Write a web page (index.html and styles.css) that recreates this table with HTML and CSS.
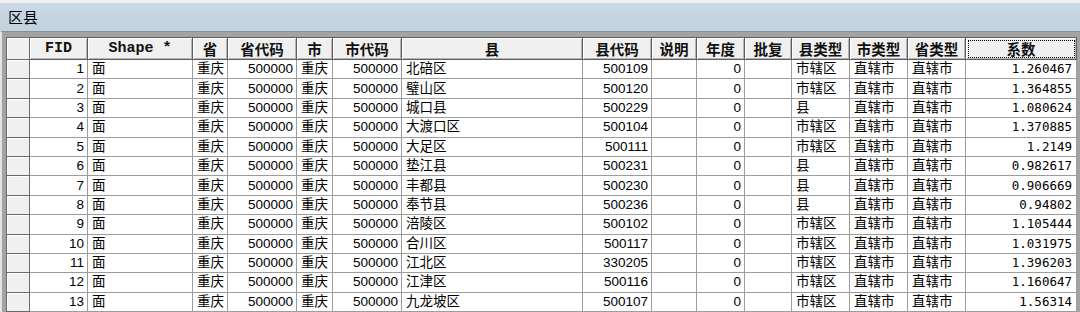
FILE: index.html
```html
<!DOCTYPE html>
<html lang="zh-CN">
<head>
<meta charset="utf-8">
<title>区县</title>
<link rel="stylesheet" href="styles.css">
</head>
<body>
<div class="window">
  <div class="titlebar">区县</div>
  <div class="frame">
    <table class="grid">
      <colgroup>
        <col class="c-rh"><col class="c-fid"><col class="c-shape"><col class="c-sheng"><col class="c-code">
        <col class="c-shi"><col class="c-code"><col class="c-xian"><col class="c-code"><col class="c-sm">
        <col class="c-nd"><col class="c-pf"><col class="c-type"><col class="c-type"><col class="c-type"><col class="c-xs">
      </colgroup>
      <thead>
        <tr>
          <th class="rh"></th><th class="lat">FID</th><th class="lat">Shape *</th><th>省</th><th>省代码</th><th>市</th><th>市代码</th><th>县</th><th>县代码</th><th>说明</th><th>年度</th><th>批复</th><th>县类型</th><th>市类型</th><th>省类型</th><th class="sel">系数</th>
        </tr>
      </thead>
      <tbody>
        <tr><td class="rh"></td><td class="num">1</td><td class="txt">面</td><td class="txt">重庆</td><td class="num">500000</td><td class="txt">重庆</td><td class="num">500000</td><td class="txt">北碚区</td><td class="num">500109</td><td></td><td class="num">0</td><td></td><td class="txt">市辖区</td><td class="txt">直辖市</td><td class="txt">直辖市</td><td class="dbl">1.260467</td></tr>
        <tr><td class="rh"></td><td class="num">2</td><td class="txt">面</td><td class="txt">重庆</td><td class="num">500000</td><td class="txt">重庆</td><td class="num">500000</td><td class="txt">璧山区</td><td class="num">500120</td><td></td><td class="num">0</td><td></td><td class="txt">市辖区</td><td class="txt">直辖市</td><td class="txt">直辖市</td><td class="dbl">1.364855</td></tr>
        <tr><td class="rh"></td><td class="num">3</td><td class="txt">面</td><td class="txt">重庆</td><td class="num">500000</td><td class="txt">重庆</td><td class="num">500000</td><td class="txt">城口县</td><td class="num">500229</td><td></td><td class="num">0</td><td></td><td class="txt">县</td><td class="txt">直辖市</td><td class="txt">直辖市</td><td class="dbl">1.080624</td></tr>
        <tr><td class="rh"></td><td class="num">4</td><td class="txt">面</td><td class="txt">重庆</td><td class="num">500000</td><td class="txt">重庆</td><td class="num">500000</td><td class="txt">大渡口区</td><td class="num">500104</td><td></td><td class="num">0</td><td></td><td class="txt">市辖区</td><td class="txt">直辖市</td><td class="txt">直辖市</td><td class="dbl">1.370885</td></tr>
        <tr><td class="rh"></td><td class="num">5</td><td class="txt">面</td><td class="txt">重庆</td><td class="num">500000</td><td class="txt">重庆</td><td class="num">500000</td><td class="txt">大足区</td><td class="num">500111</td><td></td><td class="num">0</td><td></td><td class="txt">市辖区</td><td class="txt">直辖市</td><td class="txt">直辖市</td><td class="dbl">1.2149</td></tr>
        <tr><td class="rh"></td><td class="num">6</td><td class="txt">面</td><td class="txt">重庆</td><td class="num">500000</td><td class="txt">重庆</td><td class="num">500000</td><td class="txt">垫江县</td><td class="num">500231</td><td></td><td class="num">0</td><td></td><td class="txt">县</td><td class="txt">直辖市</td><td class="txt">直辖市</td><td class="dbl">0.982617</td></tr>
        <tr><td class="rh"></td><td class="num">7</td><td class="txt">面</td><td class="txt">重庆</td><td class="num">500000</td><td class="txt">重庆</td><td class="num">500000</td><td class="txt">丰都县</td><td class="num">500230</td><td></td><td class="num">0</td><td></td><td class="txt">县</td><td class="txt">直辖市</td><td class="txt">直辖市</td><td class="dbl">0.906669</td></tr>
        <tr><td class="rh"></td><td class="num">8</td><td class="txt">面</td><td class="txt">重庆</td><td class="num">500000</td><td class="txt">重庆</td><td class="num">500000</td><td class="txt">奉节县</td><td class="num">500236</td><td></td><td class="num">0</td><td></td><td class="txt">县</td><td class="txt">直辖市</td><td class="txt">直辖市</td><td class="dbl">0.94802</td></tr>
        <tr><td class="rh"></td><td class="num">9</td><td class="txt">面</td><td class="txt">重庆</td><td class="num">500000</td><td class="txt">重庆</td><td class="num">500000</td><td class="txt">涪陵区</td><td class="num">500102</td><td></td><td class="num">0</td><td></td><td class="txt">市辖区</td><td class="txt">直辖市</td><td class="txt">直辖市</td><td class="dbl">1.105444</td></tr>
        <tr><td class="rh"></td><td class="num">10</td><td class="txt">面</td><td class="txt">重庆</td><td class="num">500000</td><td class="txt">重庆</td><td class="num">500000</td><td class="txt">合川区</td><td class="num">500117</td><td></td><td class="num">0</td><td></td><td class="txt">市辖区</td><td class="txt">直辖市</td><td class="txt">直辖市</td><td class="dbl">1.031975</td></tr>
        <tr><td class="rh"></td><td class="num">11</td><td class="txt">面</td><td class="txt">重庆</td><td class="num">500000</td><td class="txt">重庆</td><td class="num">500000</td><td class="txt">江北区</td><td class="num">330205</td><td></td><td class="num">0</td><td></td><td class="txt">市辖区</td><td class="txt">直辖市</td><td class="txt">直辖市</td><td class="dbl">1.396203</td></tr>
        <tr><td class="rh"></td><td class="num">12</td><td class="txt">面</td><td class="txt">重庆</td><td class="num">500000</td><td class="txt">重庆</td><td class="num">500000</td><td class="txt">江津区</td><td class="num">500116</td><td></td><td class="num">0</td><td></td><td class="txt">市辖区</td><td class="txt">直辖市</td><td class="txt">直辖市</td><td class="dbl">1.160647</td></tr>
        <tr><td class="rh"></td><td class="num">13</td><td class="txt">面</td><td class="txt">重庆</td><td class="num">500000</td><td class="txt">重庆</td><td class="num">500000</td><td class="txt">九龙坡区</td><td class="num">500107</td><td></td><td class="num">0</td><td></td><td class="txt">市辖区</td><td class="txt">直辖市</td><td class="txt">直辖市</td><td class="dbl">1.56314</td></tr>
        <tr><td class="rh"></td><td></td><td></td><td></td><td></td><td></td><td></td><td></td><td></td><td></td><td></td><td></td><td></td><td></td><td></td><td></td></tr>
      </tbody>
    </table>
  </div>
</div>
</body>
</html>
```

FILE: styles.css
```css
html, body {
  margin: 0;
  padding: 0;
  background: #f0f0f0;
  overflow: hidden;
}

.window {
  width: 1080px;
  height: 312px;
  padding-top: 3px;
  box-sizing: border-box;
  overflow: hidden;
}

.titlebar {
  height: 28px;
  line-height: 27px;
  padding-left: 8px;
  background: linear-gradient(#cbd8e5, #c2d1df);
  font-family: "Noto Sans CJK SC", sans-serif;
  font-size: 15px;
  color: #000;
}

.frame {
  display: flex;
  border-left: 2px solid #e4e4e4;
  padding: 5px 0 0 4px;
  background: #a3a3a3;
  border-top: 1px solid #8e8e8e;
}

.grid {
  table-layout: fixed;
  width: 1071px;
  border-collapse: collapse;
  background: #fff;
  border-left: 1px solid #5c5c5c;
  border-top: 1px solid #5c5c5c;
}

.c-rh { width: 23px; }
.c-fid { width: 58px; }
.c-shape { width: 105px; }
.c-sheng { width: 35px; }
.c-code { width: 69px; }
.c-shi { width: 36px; }
.c-xian { width: 181px; }
.c-sm { width: 45px; }
.c-nd { width: 48px; }
.c-pf { width: 47px; }
.c-type { width: 58px; }
.c-xs { width: 111px; }

.grid th {
  height: 19px;
  padding: 0;
  background: #f0f0f0;
  border: 1px solid #5e5e5e;
  box-shadow: inset 1px 1px 0 #ffffff, inset -1px -1px 0 #b5b5b5;
  font-family: "Noto Sans CJK SC", sans-serif;
  font-size: 14.5px;
  font-weight: bold;
  color: #111;
  text-align: center;
  white-space: nowrap;
  overflow: hidden;
}

.grid th.lat {
  font-family: "Courier New", "Liberation Mono", monospace;
  font-size: 15px;
}

.grid th.sel {
  outline: 1px dotted #000;
  outline-offset: -3px;
}

.grid tbody tr {
  height: 19.4px;
}

.grid td {
  padding: 0 4px;
  border: 1px solid #9c9c9c;
  font-family: "Liberation Sans", "Noto Sans CJK SC", sans-serif;
  font-size: 13.5px;
  line-height: 16px;
  color: #000;
  white-space: nowrap;
  overflow: hidden;
}

.grid td.rh,
.grid th.rh {
  background: #f0f0f0;
  border: 1px solid #6a6a6a;
  box-shadow: inset 1px 1px 0 #ffffff;
  padding: 0;
}

.grid td.num {
  text-align: right;
  padding-right: 3px;
}

.grid td.txt {
  text-align: left;
  padding-left: 4px;
}

.grid td.dbl {
  text-align: right;
  padding-right: 4px;
  font-family: "DejaVu Sans Mono", monospace;
  font-size: 12.5px;
}
```
